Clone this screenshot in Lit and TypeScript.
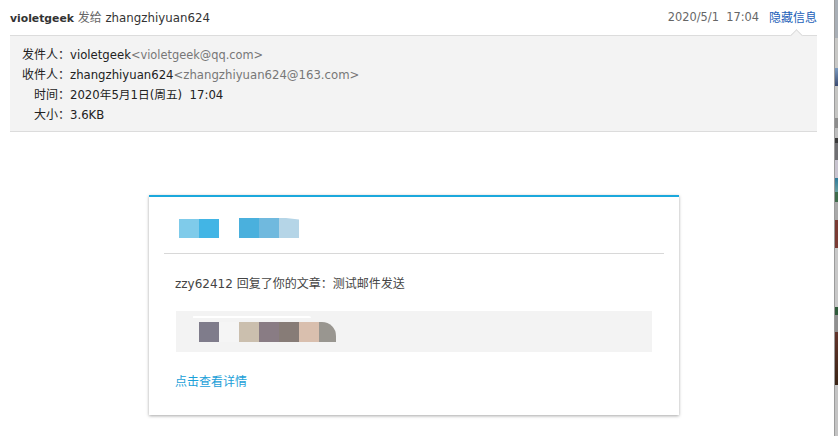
import { LitElement, html, css } from 'lit';
import { customElement } from 'lit/decorators.js';

type Tile = { w: number; color: string };

// blurred-out mosaic tiles from the mail body
const logoA: Tile[] = [
  { w: 20, color: '#7fcbea' },
  { w: 20, color: '#42b5e5' },
];
const logoB: Tile[] = [
  { w: 20, color: '#4ab0dd' },
  { w: 20, color: '#70b9de' },
  { w: 20, color: '#b5d5e7' },
];
const quoteTiles: Tile[] = [
  { w: 20, color: '#7f7c8b' },
  { w: 20, color: '#f5f5f5' },
  { w: 20, color: '#cbbfae' },
  { w: 20, color: '#897c84' },
  { w: 20, color: '#877c77' },
  { w: 20, color: '#d9bfae' },
  { w: 17, color: '#999690' },
];

// the window behind, seen along the right edge
const strip: { h: number; bg: string }[] = [
  { h: 38, bg: '#a9afb6' },
  { h: 30, bg: '#c8c8c6' },
  { h: 18, bg: 'linear-gradient(#7d9cc0, #3a4a70)' },
  { h: 32, bg: '#c5c5c3' },
  { h: 10, bg: '#8c8c8c' },
  { h: 10, bg: '#bdbdbd' },
  { h: 5, bg: '#3a3a3a' },
  { h: 17, bg: '#6f6f72' },
  { h: 18, bg: '#c8c4cf' },
  { h: 14, bg: 'linear-gradient(#2e7a9a, #6a9fa0)' },
  { h: 10, bg: '#3f6b4b' },
  { h: 18, bg: '#a9a9a9' },
  { h: 28, bg: '#7a3b34' },
  { h: 59, bg: '#c8c8c8' },
  { h: 8, bg: '#2f5a3a' },
  { h: 17, bg: '#8f8f8f' },
  { h: 53, bg: 'linear-gradient(#63352c, #3a2415)' },
  { h: 51, bg: '#c4c4c4' },
];

@customElement('app-root')
export class AppRoot extends LitElement {
  static styles = css`
    :host {
      display: flex;
      width: 838px;
      height: 436px;
      overflow: hidden;
      background: #fff;
      font-family: 'DejaVu Sans', 'Noto Sans CJK SC', sans-serif;
      font-size: 12px;
      color: #333;
    }

    .mail {
      width: 834px;
      flex: none;
      padding-left: 10px;
      box-sizing: border-box;
    }

    .strip {
      width: 4px;
      flex: none;
      display: flex;
      flex-direction: column;
      box-sizing: border-box;
      border-left: 1px solid #9c9c9c;
    }

    .top {
      width: 807px;
      height: 35px;
      display: flex;
      align-items: center;
      justify-content: space-between;
      box-sizing: border-box;
      padding-bottom: 2px;
    }

    .subject {
      font-size: 11.8px;
    }

    .subject b {
      color: #333;
      font-size: 10.8px;
    }

    .subject .to {
      color: #666;
      font-size: 12px;
    }

    .meta {
      display: flex;
      gap: 10px;
      color: #666;
      font-size: 11.4px;
      align-items: center;
    }

    .meta a {
      color: #1d5fb8;
      font-size: 12px;
    }

    .info {
      position: relative;
      width: 807px;
      height: 97px;
      box-sizing: border-box;
      padding: 9px 0 0 12px;
      background: #f3f3f3;
      border-top: 1px solid #dcdcdc;
      border-bottom: 1px solid #dcdcdc;
    }

    .caret {
      position: absolute;
      top: -5px;
      right: 16px;
      width: 8px;
      height: 8px;
      background: #f3f3f3;
      border-top: 1px solid #dcdcdc;
      border-left: 1px solid #dcdcdc;
      transform: rotate(45deg);
    }

    .row {
      display: grid;
      grid-template-columns: 48px 1fr;
      height: 20px;
      line-height: 20px;
      color: #222;
      font-size: 11.7px;
    }

    .row .key {
      text-align: right;
      font-size: 12px;
    }

    .addr {
      color: #777;
      font-size: 11.4px;
    }

    .addr.long {
      font-size: 11.7px;
    }

    .card {
      width: 530px;
      height: 220px;
      margin: 63px 0 0 139px;
      box-sizing: border-box;
      background: #fff;
      border-top: 2px solid #1ba8dc;
      box-shadow: 0 1px 3px rgba(0, 0, 0, 0.35);
      padding: 0 15px 0 26px;
    }

    .logo {
      height: 57px;
      display: flex;
      align-items: flex-start;
      gap: 20px;
      padding: 21px 0 0 15px;
      margin-left: -11px;
      box-sizing: border-box;
      border-bottom: 1px solid #d8d8d8;
    }

    .tiles {
      display: flex;
      height: 20px;
    }

    .tiles span {
      display: block;
    }

    .logo .tiles:first-child {
      height: 19px;
      margin-top: 1px;
    }

    .logo .tiles:last-child span:last-child {
      clip-path: polygon(0 0, 35% 0, 100% 8%, 100% 100%, 0 100%);
    }

    .line {
      margin-top: 21px;
      line-height: 18px;
      color: #444;
    }

    .quote {
      position: relative;
      width: 476px;
      height: 41px;
      margin: 18px 0 0 1px;
      background: #f3f3f3;
      display: flex;
      align-items: center;
      padding-left: 23px;
      box-sizing: border-box;
    }

    .quote .tiles span:last-child {
      border-top-right-radius: 14px;
    }

    .smear {
      position: absolute;
      left: 17px;
      top: 5px;
      width: 118px;
      height: 2px;
      background: #fff;
      border-radius: 2px 8px 0 0;
    }

    .more {
      display: block;
      margin-top: 22px;
      line-height: 16px;
      color: #1ba0d8;
    }
  `;

  private _tiles(tiles: Tile[]) {
    return html`<div class="tiles">
      ${tiles.map((t) => html`<span style="width:${t.w}px;background:${t.color}"></span>`)}
    </div>`;
  }

  render() {
    return html`
      <div class="mail">
        <div class="top">
          <div class="subject"><b>violetgeek</b> <span class="to">发给</span> zhangzhiyuan624</div>
          <div class="meta">
            <span>2020/5/1&nbsp;&nbsp;17:04</span>
            <a>隐藏信息</a>
          </div>
        </div>
        <div class="info">
          <div class="caret"></div>
          <div class="row">
            <span class="key">发件人：</span>
            <span>violetgeek<span class="addr">&lt;violetgeek@qq.com&gt;</span></span>
          </div>
          <div class="row">
            <span class="key">收件人：</span>
            <span>zhangzhiyuan624<span class="addr long">&lt;zhangzhiyuan624@163.com&gt;</span></span>
          </div>
          <div class="row"><span class="key">时间：</span><span>2020年5月1日(周五)&nbsp;&nbsp;17:04</span></div>
          <div class="row"><span class="key">大小：</span><span>3.6KB</span></div>
        </div>
        <div class="card">
          <div class="logo">${this._tiles(logoA)}${this._tiles(logoB)}</div>
          <div class="line">zzy62412 回复了你的文章：测试邮件发送</div>
          <div class="quote"><div class="smear"></div>${this._tiles(quoteTiles)}</div>
          <a class="more">点击查看详情</a>
        </div>
      </div>
      <div class="strip">
        ${strip.map((s) => html`<div style="height:${s.h}px;background:${s.bg}"></div>`)}
      </div>
    `;
  }
}

declare global {
  interface HTMLElementTagNameMap {
    'app-root': AppRoot;
  }
}
